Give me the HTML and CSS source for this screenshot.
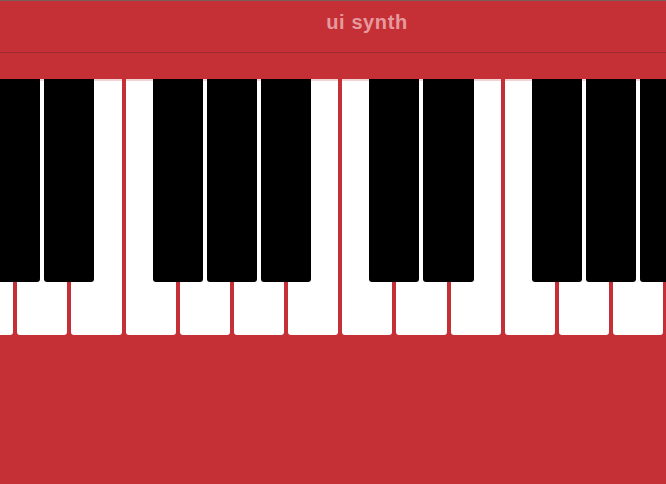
FILE: index.html
```html
<!DOCTYPE html>
<html>
<head>
<meta charset="utf-8">
<link rel="stylesheet" href="styles.css">
</head>
<body>
<div class="app">
  <header class="titlebar"><h1 class="title">ui synth</h1></header>
  <div class="band"></div>
  <div class="keyboard">
    <div class="whites">
      <div class="white"></div><div class="white"></div><div class="white"></div><div class="white"></div>
      <div class="white"></div><div class="white"></div><div class="white"></div><div class="white"></div>
      <div class="white"></div><div class="white"></div><div class="white"></div><div class="white"></div>
      <div class="white"></div><div class="white"></div>
    </div>
    <div class="blacks">
      <div class="black"></div><div class="black"></div><div class="slot"></div>
      <div class="black"></div><div class="black"></div><div class="black"></div><div class="slot"></div>
      <div class="black"></div><div class="black"></div><div class="slot"></div>
      <div class="black"></div><div class="black"></div><div class="black"></div>
    </div>
  </div>
</div>
</body>
</html>
```
FILE: styles.css
```css
html, body {
  margin: 0;
  padding: 0;
  background: #c43036;
  overflow: hidden;
}
.app {
  width: 666px;
  height: 484px;
  border-top: 1px solid #7a5c5d;
  box-sizing: border-box;
  overflow: hidden;
}
.titlebar {
  height: 51px;
  border-bottom: 1px solid #9c2a2e;
  display: flex;
  align-items: center;
  justify-content: center;
  padding-left: 68px;
  box-sizing: content-box;
}
.title {
  margin: 0;
  margin-top: -8px;
  font-family: "Liberation Sans", Arial, sans-serif;
  font-weight: bold;
  font-size: 20px;
  letter-spacing: 0.6px;
  color: #e69a9e;
}
.band {
  height: 26px;
}
.keyboard {
  position: relative;
  height: 256px;
}
.whites {
  display: flex;
  gap: 4px;
  margin-left: -37px;
  height: 100%;
}
.white {
  flex: 0 0 50.18px;
  background: #fff;
  border-radius: 0 0 3px 3px;
  box-shadow: inset 0 2px 0 #f2d4d5;
}
.blacks {
  position: absolute;
  top: 0;
  left: -10px;
  display: flex;
  gap: 4px;
  height: 203px;
}
.black, .slot {
  flex: 0 0 50.18px;
}
.black {
  background: #000;
  border-radius: 0 0 3px 3px;
}
```
